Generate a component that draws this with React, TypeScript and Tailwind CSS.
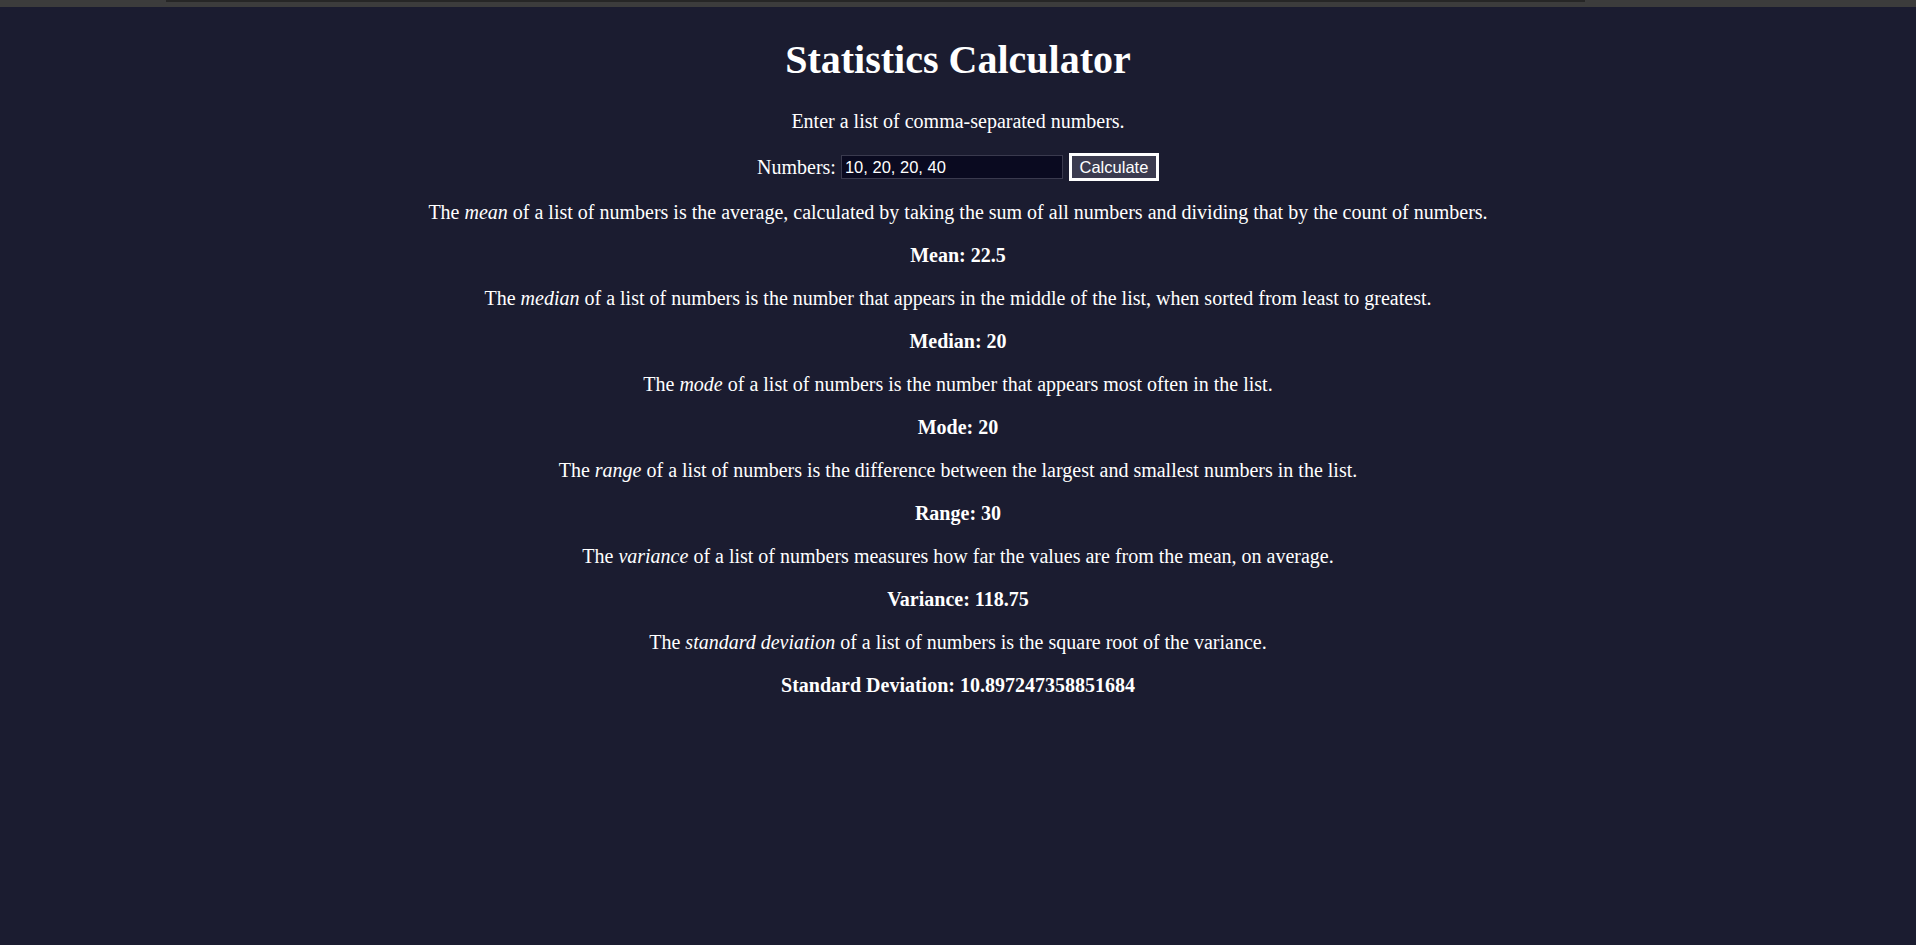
import { useState } from "react"

const serif = { fontFamily: '"Liberation Serif", "Times New Roman", serif' }

// Helpers for the stats
function calc(nums: number[]) {
  const n = nums.length
  const mean = nums.reduce((a, b) => a + b, 0) / n
  const sorted = [...nums].sort((a, b) => a - b)
  const median = n % 2 ? sorted[(n - 1) / 2] : (sorted[n / 2 - 1] + sorted[n / 2]) / 2
  const counts: Record<number, number> = {}
  let mode = sorted[0]
  for (const x of nums) {
    counts[x] = (counts[x] || 0) + 1
    if (counts[x] > counts[mode]) mode = x
  }
  const range = sorted[n - 1] - sorted[0]
  const variance = nums.reduce((a, b) => a + (b - mean) ** 2, 0) / n
  return { mean, median, mode, range, variance, std: Math.sqrt(variance) }
}

export default function App() {
  const [input, setInput] = useState("10, 20, 20, 40")
  const [stats, setStats] = useState(() => calc([10, 20, 20, 40]))

  const onCalc = () => {
    const nums = input
      .split(",")
      .map((s) => parseFloat(s.trim()))
      .filter((x) => !isNaN(x))
    if (nums.length) setStats(calc(nums))
  }

  const rows: { term: string; text: string; label: string; value: number }[] = [
    {
      term: "mean",
      text: " of a list of numbers is the average, calculated by taking the sum of all numbers and dividing that by the count of numbers.",
      label: "Mean",
      value: stats.mean,
    },
    {
      term: "median",
      text: " of a list of numbers is the number that appears in the middle of the list, when sorted from least to greatest.",
      label: "Median",
      value: stats.median,
    },
    {
      term: "mode",
      text: " of a list of numbers is the number that appears most often in the list.",
      label: "Mode",
      value: stats.mode,
    },
    {
      term: "range",
      text: " of a list of numbers is the difference between the largest and smallest numbers in the list.",
      label: "Range",
      value: stats.range,
    },
    {
      term: "variance",
      text: " of a list of numbers measures how far the values are from the mean, on average.",
      label: "Variance",
      value: stats.variance,
    },
    {
      term: "standard deviation",
      text: " of a list of numbers is the square root of the variance.",
      label: "Standard Deviation",
      value: stats.std,
    },
  ]

  return (
    <div className="min-h-[945px] bg-[#1b1c30] text-white" style={serif}>
      {/* browser strip */}
      <div className="h-[7px] bg-[#3c3c3c]">
        <div className="ml-[166px] h-[2px] w-[1419px] bg-[#262626]" />
      </div>

      <div className="flex flex-col items-center text-center text-[20px] leading-[23px]">
        <h1 className="mt-[30px] mb-[27px] text-[40px] leading-[46px] font-bold">Statistics Calculator</h1>
        <p className="mb-[20px]">Enter a list of comma-separated numbers.</p>

        <div className="flex items-center">
          <label htmlFor="nums">Numbers:</label>
          <input
            id="nums"
            value={input}
            onChange={(e) => setInput(e.target.value)}
            className="ml-[5px] h-[24px] w-[222px] border border-[#3a3a4e] bg-[#0a0a20] px-[3px] text-[16.5px] text-white outline-none"
            style={{ fontFamily: '"Liberation Sans", Arial, sans-serif' }}
          />
          <button
            onClick={onCalc}
            className="ml-[6px] h-[28px] w-[90px] border-[3px] border-white bg-[#3b3b4f] text-[16.5px] text-white"
            style={{ fontFamily: '"Liberation Sans", Arial, sans-serif' }}
          >
            Calculate
          </button>
        </div>

        {rows.map((r) => (
          <div key={r.label}>
            <p className="mt-[20px]">
              The <em>{r.term}</em>
              {r.text}
            </p>
            <p className="mt-[20px] font-bold">
              {r.label}: {r.value}
            </p>
          </div>
        ))}
      </div>
    </div>
  )
}
